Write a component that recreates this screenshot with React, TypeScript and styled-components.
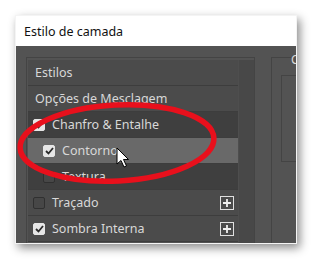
import React from "react";
import styled, { createGlobalStyle } from "styled-components";

const Global = createGlobalStyle`
  html, body { margin: 0; padding: 0; background: #ffffff; }
  body { font-family: "Noto Sans", "Open Sans", sans-serif; }
`;

const Page = styled.div`
  width: 312px;
  height: 260px;
  padding: 15px 0 0 15px;
  box-sizing: border-box;
  position: relative;
  overflow: hidden;
`;

const Window = styled.div`
  width: 282px;
  height: 229px;
  display: flex;
  flex-direction: column;
  background: #535353;
  border: 1px solid #f4f4f4;
  box-sizing: border-box;
  box-shadow: 3px 4px 9px rgba(0, 0, 0, 0.45);
  overflow: hidden;
`;

const TitleBar = styled.div`
  height: 30px;
  flex: none;
  background: #ffffff;
  display: flex;
  align-items: center;
  padding-left: 8px;
  font-size: 12.5px;
  color: #111;
`;

const Body = styled.div`
  flex: 1;
  display: flex;
  padding: 11px 0 0 10px;
  gap: 16px;
  min-height: 0;
`;

const LeftPanel = styled.div`
  width: 229px;
  flex: none;
  border: 1px solid #444;
  border-bottom: none;
  box-sizing: border-box;
  display: flex;
  padding: 2px 0 0 1px;
`;

const List = styled.div`
  width: 210px;
  display: flex;
  flex-direction: column;
`;

const Scroll = styled.div`
  flex: 1;
  background: #484848;
  border-left: 1px solid #4e4e4e;
`;

const Row = styled.div<{ $bg: string; $indent?: boolean }>`
  height: 26px;
  flex: none;
  box-sizing: border-box;
  background: ${(p) => p.$bg};
  border-bottom: 1px solid #3d3d3d;
  display: flex;
  align-items: center;
  padding: 0 4px 0 ${(p) => (p.$indent ? 15 : 5)}px;
  gap: 7px;
  color: #d8d8d8;
  font-size: 12.5px;
`;

const Heading = styled.span`
  padding-left: 2px;
`;

const Label = styled.span`
  flex: 1;
  white-space: nowrap;
`;

const Box = styled.span<{ $checked: boolean }>`
  width: 12px;
  height: 12px;
  box-sizing: border-box;
  border-radius: 2px;
  flex: none;
  display: flex;
  align-items: center;
  justify-content: center;
  background: ${(p) => (p.$checked ? "#e6e6e6" : "#474747")};
  border: 1px solid ${(p) => (p.$checked ? "#e6e6e6" : "#303030")};
`;

const Plus = styled.span`
  width: 14px;
  height: 14px;
  box-sizing: border-box;
  border: 1px solid #e0e0e0;
  flex: none;
  display: flex;
  align-items: center;
  justify-content: center;
`;

const RightPanel = styled.div`
  flex: 1;
  border: 1px solid #444;
  border-right: none;
  border-bottom: none;
  padding: 17px 0 0 9px;
  position: relative;
`;

const Peek = styled.span`
  position: absolute;
  left: 19px;
  top: -7px;
  color: #d8d8d8;
  font-size: 12px;
  background: #535353;
`;

const InnerBox = styled.div`
  height: 85px;
  border: 1px solid #444;
  border-right: none;
`;

const Overlay = styled.svg`
  position: absolute;
  left: 0;
  top: 0;
  pointer-events: none;
`;

const Check = () => (
  <svg width="9" height="8" viewBox="0 0 9 8">
    <path d="M1 4 L3.5 6.5 L8 1" fill="none" stroke="#2a2a2a" strokeWidth="1.8" />
  </svg>
);

const PlusIcon = () => (
  <svg width="10" height="10" viewBox="0 0 10 10">
    <path d="M5 1 V9 M1 5 H9" stroke="#f0f0f0" strokeWidth="1.8" />
  </svg>
);

type Item = { label: string; checked: boolean; bg: string; indent?: boolean; plus?: boolean };

const items: Item[] = [
  { label: "Chanfro & Entalhe", checked: true, bg: "#3f3f3f" },
  { label: "Contorno", checked: true, bg: "#696969", indent: true },
  { label: "Textura", checked: false, bg: "#3f3f3f", indent: true },
  { label: "Traçado", checked: false, bg: "#4b4b4b", plus: true },
  { label: "Sombra Interna", checked: true, bg: "#4b4b4b", plus: true },
];

export default function App() {
  return (
    <>
      <Global />
      <Page>
        <Window>
          <TitleBar>Estilo de camada</TitleBar>
          <Body>
            <LeftPanel>
              <List>
                <Row $bg="#4b4b4b">
                  <Heading>Estilos</Heading>
                </Row>
                <Row $bg="#4b4b4b">
                  <Heading>Opções de Mesclagem</Heading>
                </Row>
                {items.map((it) => (
                  <Row key={it.label} $bg={it.bg} $indent={it.indent}>
                    <Box $checked={it.checked}>{it.checked && <Check />}</Box>
                    <Label>{it.label}</Label>
                    {it.plus && (
                      <Plus>
                        <PlusIcon />
                      </Plus>
                    )}
                  </Row>
                ))}
              </List>
              <Scroll />
            </LeftPanel>
            <RightPanel>
              <Peek>C</Peek>
              <InnerBox />
            </RightPanel>
          </Body>
        </Window>
        <Overlay width="312" height="260" viewBox="0 0 312 260">
          <ellipse
            cx="117"
            cy="143"
            rx="97"
            ry="38"
            fill="none"
            stroke="#e8101c"
            strokeWidth="5.5"
            transform="rotate(-3 117 143)"
          />
          <path
            d="M117 148 L117 164 L121 160.5 L124 167 L126.5 166 L123.5 159.5 L128.5 159.5 Z"
            fill="#ffffff"
            stroke="#000000"
            strokeWidth="1"
            strokeLinejoin="round"
          />
        </Overlay>
      </Page>
    </>
  );
}
